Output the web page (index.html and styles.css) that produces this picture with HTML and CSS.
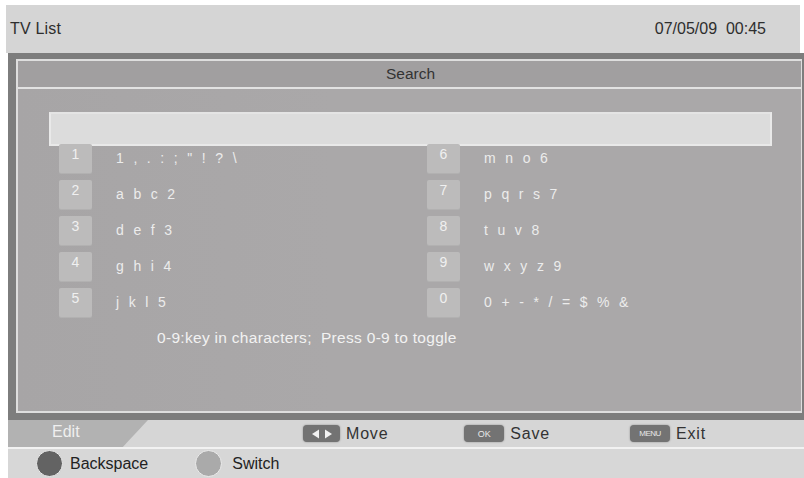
FILE: index.html
```html
<!DOCTYPE html>
<html>
<head>
<meta charset="utf-8">
<link rel="stylesheet" href="styles.css">
</head>
<body>
<div class="screen">
  <header class="topbar">
    <span class="title">TV List</span>
    <span class="clock">07/05/09&nbsp;&nbsp;00:45</span>
  </header>
  <section class="frame">
    <div class="panel">
      <div class="panel-title">Search</div>
      <div class="panel-body">
        <div class="input-bar"></div>
        <div class="keys">
          <div class="col">
            <div class="row"><span class="key">1</span><span class="chars">1 , . : ; " ! ? \</span></div>
            <div class="row"><span class="key">2</span><span class="chars">a b c 2</span></div>
            <div class="row"><span class="key">3</span><span class="chars">d e f 3</span></div>
            <div class="row"><span class="key">4</span><span class="chars">g h i 4</span></div>
            <div class="row"><span class="key">5</span><span class="chars">j k l 5</span></div>
          </div>
          <div class="col">
            <div class="row"><span class="key">6</span><span class="chars">m n o 6</span></div>
            <div class="row"><span class="key">7</span><span class="chars">p q r s 7</span></div>
            <div class="row"><span class="key">8</span><span class="chars">t u v 8</span></div>
            <div class="row"><span class="key">9</span><span class="chars">w x y z 9</span></div>
            <div class="row"><span class="key">0</span><span class="chars">0 + - * / = $ % &amp;</span></div>
          </div>
        </div>
        <div class="hint">0-9:key in characters;&nbsp; Press 0-9 to toggle</div>
      </div>
    </div>
  </section>
  <div class="editbar">
    <div class="edit-tab">Edit</div>
    <div class="actions">
      <span class="action"><span class="btn arrows"><svg width="22" height="10" viewBox="0 0 22 10"><polygon points="1,5 8,0.5 8,9.5" fill="#f2f2f2"/><polygon points="21,5 14,0.5 14,9.5" fill="#f2f2f2"/></svg></span><span class="lbl">Move</span></span>
      <span class="action ok"><span class="btn">OK</span><span class="lbl">Save</span></span>
      <span class="action menu"><span class="btn">MENU</span><span class="lbl">Exit</span></span>
    </div>
  </div>
  <footer class="bottombar">
    <span class="fkey"><span class="dot dark"></span>Backspace</span>
    <span class="fkey switch"><span class="dot light"></span>Switch</span>
  </footer>
</div>
</body>
</html>
```
FILE: styles.css
```css
html, body {
  margin: 0;
  padding: 0;
  background: #ffffff;
}
body {
  width: 804px;
  height: 478px;
  overflow: hidden;
  font-family: "Liberation Sans", Arial, sans-serif;
}
.screen {
  padding-top: 5px;
  padding-left: 6px;
  display: flex;
  flex-direction: column;
}
.topbar {
  height: 48px;
  width: 794px;
  background: #d5d5d5;
  display: flex;
  align-items: center;
  justify-content: space-between;
  font-size: 16px;
  color: #2e2e2e;
  padding: 0 34px 0 4px;
  box-sizing: border-box;
}
.topbar .title { letter-spacing: 0.2px; }
.frame {
  margin-left: 2px;
  width: 796px;
  height: 367px;
  box-sizing: border-box;
  background: #7d7d7d;
  padding: 6px 2px 7px 8px;
}
.panel {
  height: 100%;
  box-sizing: border-box;
  border: 2px solid #dedede;
  border-right-width: 1px;
  display: flex;
  flex-direction: column;
  background: #a9a7a8;
}
.panel-title {
  height: 26px;
  flex: none;
  background: #a19fa0;
  border-bottom: 2px solid #e2e2e2;
  display: flex;
  align-items: center;
  justify-content: center;
  font-size: 15.5px;
  color: #333;
  padding-left: 2px;
}
.panel-body {
  flex: 1;
  position: relative;
  background: linear-gradient(90deg, #a7a5a6 0%, #aaa8a9 40%, #aaa8a9 100%);
  padding: 23px 0 0 31px;
}
.input-bar {
  width: 719px;
  height: 30px;
  background: #dcdcdc;
  border: 2px solid #e9e9e9;
  border-top-color: #e4e4e4;
}
.keys {
  display: flex;
  margin-top: -2px;
  margin-left: 10px;
}
.col {
  display: flex;
  flex-direction: column;
  gap: 7px;
}
.col:first-child { width: 368px; }
.row {
  display: flex;
  align-items: center;
  height: 29px;
}
.key {
  width: 33px;
  height: 29px;
  box-sizing: border-box;
  background: #bcbbbb;
  border-radius: 2px;
  color: #f0f0f0;
  font-size: 14px;
  text-align: center;
  padding-top: 2px;
  flex: none;
  box-shadow: 0 1px 0 #b2b1b1;
}
.chars {
  margin-left: 24px;
  color: #ececec;
  font-size: 14px;
  letter-spacing: 3.6px;
  word-spacing: -1.5px;
  padding-bottom: 2px;
}
.hint {
  margin-top: 12px;
  margin-left: 108px;
  font-size: 15.5px;
  color: #f2f2f2;
  letter-spacing: 0.3px;
}
.editbar {
  margin-left: 2px;
  width: 796px;
  height: 27px;
  background: #d6d6d6;
  display: flex;
  align-items: center;
  position: relative;
  border-bottom: 2px solid #f2f2f2;
}
.edit-tab {
  width: 140px;
  height: 100%;
  background: #b2b2b2;
  clip-path: polygon(0 0, 100% 0, 82% 100%, 0 100%);
  color: #efefef;
  font-size: 16px;
  display: flex;
  align-items: center;
  padding-left: 44px;
  box-sizing: border-box;
  padding-bottom: 3px;
  flex: none;
}
.actions {
  display: flex;
  align-items: center;
  padding-left: 155px;
}
.action {
  display: flex;
  align-items: center;
  font-size: 16px;
  color: #333;
  letter-spacing: 0.8px;
}
.action .lbl { margin-left: 6px; }
.btn {
  height: 17px;
  width: 37px;
  background: #737373;
  border-radius: 4px;
  color: #e8e8e8;
  font-size: 9px;
  letter-spacing: 0;
  display: flex;
  align-items: center;
  justify-content: center;
  box-shadow: 0 0 2px #8a8a8a;
}
.ok { margin-left: 76px; }
.ok .btn { width: 40px; }
.menu { margin-left: 80px; }
.menu .btn { width: 40px; font-size: 8px; letter-spacing: -0.5px; }
.bottombar {
  margin-left: 2px;
  width: 796px;
  height: 29px;
  background: #d7d7d7;
  display: flex;
  align-items: center;
  padding-left: 28px;
  box-sizing: border-box;
}
.fkey {
  display: flex;
  align-items: center;
  font-size: 16px;
  color: #222;
}
.fkey + .fkey { margin-left: 47px; }
.dot {
  width: 25px;
  height: 25px;
  border-radius: 50%;
  border: 1px solid #ececec;
  margin-right: 7px;
}
.switch .dot { margin-right: 10px; }
.dot.dark { background: #636363; }
.dot.light { background: #aaaaaa; }
```
